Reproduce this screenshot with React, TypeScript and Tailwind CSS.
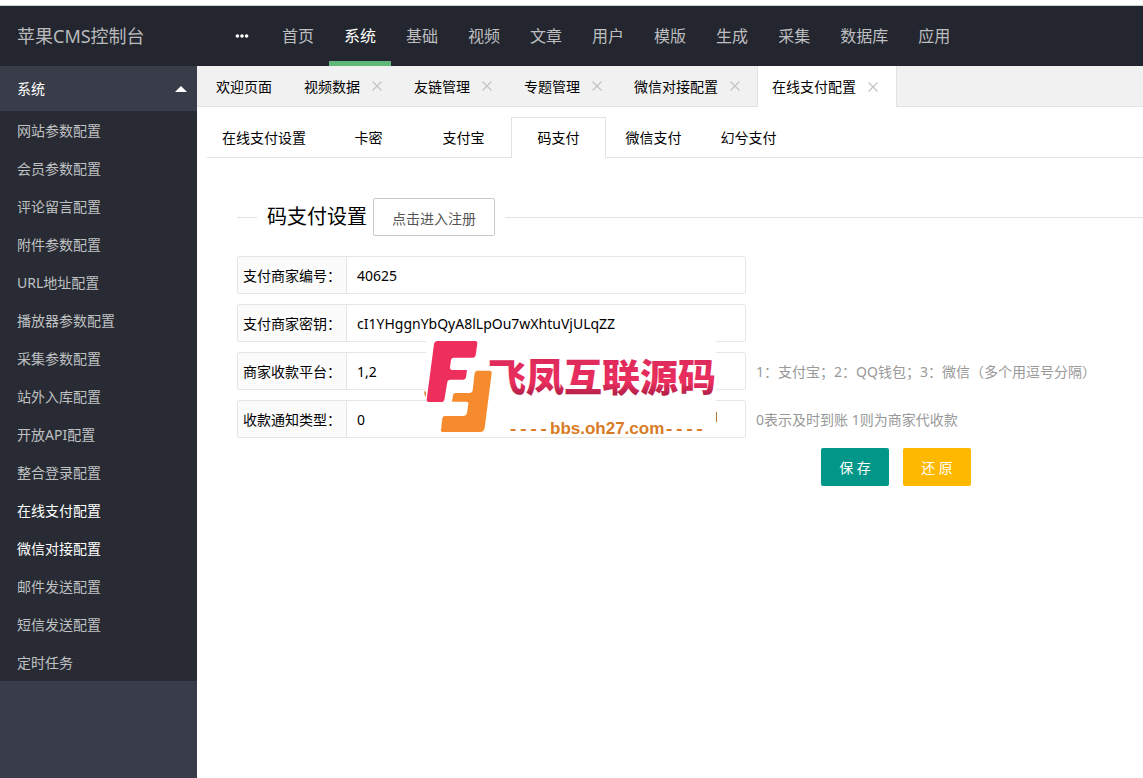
import React from 'react';

const navItems = ['首页', '系统', '基础', '视频', '文章', '用户', '模版', '生成', '采集', '数据库', '应用'];

const sideItems = [
  '网站参数配置', '会员参数配置', '评论留言配置', '附件参数配置', 'URL地址配置',
  '播放器参数配置', '采集参数配置', '站外入库配置', '开放API配置', '整合登录配置',
  '在线支付配置', '微信对接配置', '邮件发送配置', '短信发送配置', '定时任务',
];
const highlighted = ['在线支付配置', '微信对接配置'];

const pageTabs = ['视频数据', '友链管理', '专题管理', '微信对接配置', '在线支付配置'];
const payTabs = ['在线支付设置', '卡密', '支付宝', '码支付', '微信支付', '幻兮支付'];

const fields = [
  { id: 'appid', label: '支付商家编号：', value: '40625', hint: '' },
  { id: 'appkey', label: '支付商家密钥：', value: 'cI1YHggnYbQyA8lLpOu7wXhtuVjULqZZ', hint: '' },
  { id: 'type', label: '商家收款平台：', value: '1,2', hint: '1：支付宝；2：QQ钱包；3：微信（多个用逗号分隔）' },
  { id: 'act', label: '收款通知类型：', value: '0', hint: '0表示及时到账 1则为商家代收款' },
];

function Header() {
  return (
    <header className="flex h-15 bg-[#23262e]">
      <div className="flex w-[197px] shrink-0 items-center pl-[17px] text-lg text-[#b9babc]">苹果CMS控制台</div>
      <nav className="flex pl-[30px] text-base">
        <button type="button" aria-label="展开菜单" className="flex w-10 items-center pl-2">
          <svg width="14" height="4" viewBox="0 0 14 4" fill="#fff">
            <circle cx="2.4" cy="2" r="1.8" />
            <circle cx="7" cy="2" r="1.8" />
            <circle cx="11.6" cy="2" r="1.8" />
          </svg>
        </button>
        {navItems.map((name) => (
          <a
            key={name}
            href="#"
            className={
              name === '系统'
                ? 'flex items-center border-y-5 border-t-transparent border-b-[#5fb878] px-[15px] whitespace-nowrap text-white'
                : 'flex items-center px-[15px] whitespace-nowrap text-[#bdbec0]'
            }
          >
            {name}
          </a>
        ))}
      </nav>
    </header>
  );
}

function Sidebar() {
  return (
    <aside className="w-[197px] shrink-0 bg-[#393d49]">
      <button type="button" className="flex h-[45px] w-full items-center justify-between pr-[10px] pl-[17px] text-white">
        系统
        <svg width="12" height="6" viewBox="0 0 12 6" fill="#fff">
          <path d="M6 0L12 6H0Z" />
        </svg>
      </button>
      <ul className="bg-[#282b33]">
        {sideItems.map((name) => (
          <li key={name}>
            <a
              href="#"
              className={
                highlighted.includes(name)
                  ? 'flex h-[38px] items-center pl-[17px] text-white'
                  : 'flex h-[38px] items-center pl-[17px] text-[#bfc0c2]'
              }
            >
              {name}
            </a>
          </li>
        ))}
      </ul>
    </aside>
  );
}

function PageTabs() {
  return (
    <div className="flex h-[41px] border-b border-[#e2e2e2] bg-[#f1f1f1] pl-1 whitespace-nowrap">
      <a href="#" className="flex w-[88px] items-center pl-[15px]">欢迎页面</a>
      {pageTabs.map((name) => (
        <div
          key={name}
          className={
            name === '在线支付配置'
              ? '-mb-px flex items-center border-x border-[#e2e2e2] bg-white px-[14px]'
              : 'flex items-center pr-[13px] pl-[15px]'
          }
        >
          <a href="#">{name}</a>
          <button type="button" aria-label={'关闭' + name} className="ml-2 flex w-[18px] justify-center">
            <svg width="10" height="10" viewBox="0 0 10 10" stroke="#c2c2c2" strokeWidth="1.1">
              <path d="M0.5 0.5L9.5 9.5M9.5 0.5L0.5 9.5" />
            </svg>
          </button>
        </div>
      ))}
    </div>
  );
}

function BrandMark() {
  return (
    <svg
      className="pointer-events-none absolute top-[85px] left-[187px]"
      width="294"
      height="104"
      viewBox="424 341 294 104"
      aria-hidden="true"
    >
      <defs>
        <linearGradient id="brandRed" x1="0" y1="0" x2="0" y2="1">
          <stop offset="0" stopColor="#d8285a" />
          <stop offset="0.65" stopColor="#ea2f5e" />
          <stop offset="0.9" stopColor="#a91d45" />
        </linearGradient>
      </defs>
      <rect x="426" y="341" width="290" height="95" fill="#fff" />
      <path d="M424 391Q424 395 426 397V392Z" fill="#e08a3a" />
      <rect x="716" y="412" width="1" height="10" fill="#b9743a" />
      <g transform="translate(410 330) scale(0.33333)">
        <path
          d="M84 33H196Q203 33 202 40L197 76Q196 83 189 83H132Q124 83 123 90L120 112Q119 120 127 120H171L168 142Q167 149 160 149H122Q113 149 112 156L103 209Q102 216 95 216H56Q49 216 50 209L72 43Q73 33 84 33Z"
          fill="#ee2f5d"
        />
        <path
          d="M202 122H238Q246 122 245 130L224 293Q222 306 210 306H99Q92 306 93 299L97 265Q98 258 105 258H158Q169 258 171 248L175 222Q176 215 168 215H126L129 196Q130 189 137 189H178Q187 189 188 181L194 130Q195 122 202 122Z"
          fill="#f68b2e"
        />
      </g>
      <text x="488" y="391" fontSize="38" fontWeight="900" fill="url(#brandRed)" fontFamily="'Noto Sans CJK SC', sans-serif">
        飞凤互联源码
      </text>
      <g fill="#d97b25" fontWeight="700">
        <text x="508" y="434" fontSize="17" fontFamily="'Liberation Mono', monospace">----</text>
        <text x="550" y="434" fontSize="17" fontFamily="'Liberation Sans', sans-serif">bbs.oh27.com</text>
        <text x="664" y="434" fontSize="17" fontFamily="'Liberation Mono', monospace">----</text>
      </g>
    </svg>
  );
}

function PayForm() {
  return (
    <form className="relative mt-5 flex flex-col gap-[10px]" onSubmit={(e) => e.preventDefault()}>
      {fields.map((f) => (
        <div key={f.id} className="flex h-[38px] items-center">
          <label
            htmlFor={f.id}
            className="flex h-full w-[110px] shrink-0 items-center rounded-l-xs border border-[#e6e6e6] bg-[#fbfbfb] pl-[5px] whitespace-nowrap"
          >
            {f.label}
          </label>
          <input
            id={f.id}
            type="text"
            defaultValue={f.value}
            className="-ml-px h-full w-[400px] shrink-0 rounded-r-xs border border-[#e6e6e6] bg-white px-[10px] outline-none"
          />
          {f.hint && <span className="pl-[10px] whitespace-nowrap text-[#999]">{f.hint}</span>}
        </div>
      ))}
      <div className="ml-[584px] flex gap-[14px]">
        <button type="submit" className="h-[38px] w-[68px] shrink-0 rounded-xs bg-[#009688] text-white">保 存</button>
        <button type="reset" className="h-[38px] w-[68px] shrink-0 rounded-xs bg-[#ffb800] text-white">还 原</button>
      </div>
      <BrandMark />
    </form>
  );
}

export default function App() {
  return (
    <div className="flex min-h-screen flex-col overflow-hidden bg-white pt-[5px] font-['Noto_Sans','Noto_Sans_CJK_SC',sans-serif] text-sm leading-[21px] text-black">
      <div className="h-px bg-[#c9d3d0]" />
      <Header />
      <div className="flex flex-1">
        <Sidebar />
        <main className="min-w-0 flex-1">
          <PageTabs />
          <div className="pt-[10px] pl-[10px]">
            <div className="flex h-[41px] border-b border-[#e2e2e2]">
              {payTabs.map((name) => (
                <button
                  key={name}
                  type="button"
                  className={
                    name === '码支付'
                      ? '-mb-px min-w-[95px] border border-b-0 border-[#e2e2e2] bg-white px-[14px] pb-[2px]'
                      : 'min-w-[95px] px-[15px]'
                  }
                >
                  {name}
                </button>
              ))}
            </div>
            <section className="pt-10 pl-[30px]">
              <div className="flex items-center gap-[10px]">
                <span className="h-px w-5 bg-[#e2e2e2]" />
                <div className="flex items-center gap-[6px]">
                  <h2 className="text-xl leading-8">码支付设置</h2>
                  <button type="button" className="h-[38px] w-[122px] rounded-xs border border-[#c9c9c9] bg-white pt-[3px] text-[#555]">
                    点击进入注册
                  </button>
                </div>
                <span className="h-px flex-1 bg-[#e2e2e2]" />
              </div>
              <PayForm />
            </section>
          </div>
        </main>
      </div>
    </div>
  );
}
